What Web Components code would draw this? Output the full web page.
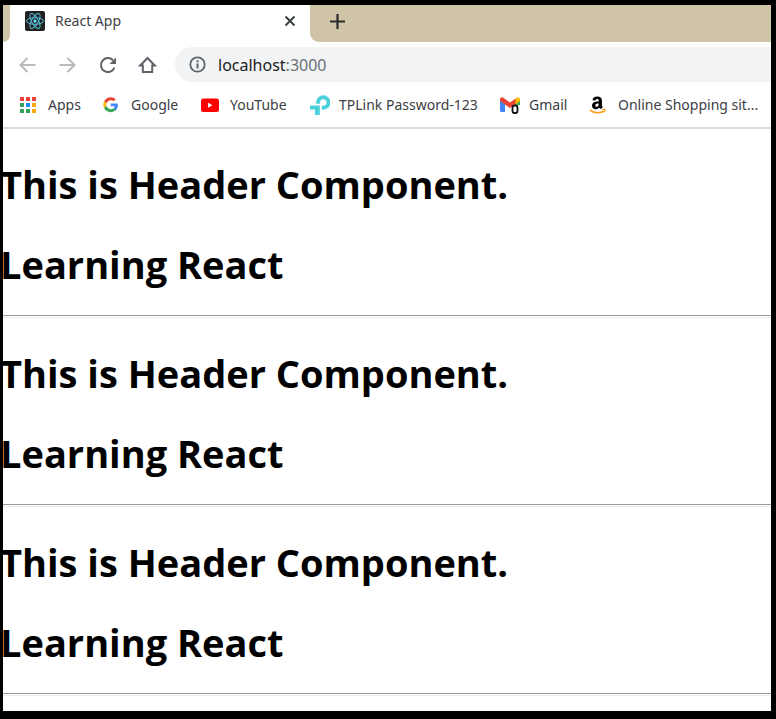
<!DOCTYPE html>
<html lang="en">
<head>
<meta charset="utf-8">
<title>React App</title>
<style>
  html, body { margin: 0; min-height: 100%; background: #000; }
  body { font-family: "Noto Sans", "Open Sans", sans-serif; color: #3c4043; }
</style>
</head>
<body>
<browser-window>
  <tab-strip slot="tabs" label="React App"></tab-strip>
  <address-bar slot="toolbar" host="localhost" port=":3000"></address-bar>
  <bookmarks-bar slot="bookmarks">
    <bookmark-link name="apps">Apps</bookmark-link>
    <bookmark-link name="google">Google</bookmark-link>
    <bookmark-link name="youtube">YouTube</bookmark-link>
    <bookmark-link name="tplink">TPLink Password-123</bookmark-link>
    <bookmark-link name="gmail">Gmail</bookmark-link>
    <bookmark-link name="amazon">Online Shopping sit...</bookmark-link>
  </bookmarks-bar>
  <header-section><span slot="title">This is Header Component.</span><span slot="subtitle">Learning React</span></header-section>
  <header-section><span slot="title">This is Header Component.</span><span slot="subtitle">Learning React</span></header-section>
  <header-section><span slot="title">This is Header Component.</span><span slot="subtitle">Learning React</span></header-section>
</browser-window>

<script>
const component = (name, render) => customElements.define(name, class extends HTMLElement {
  constructor() {
    super();
    this.attachShadow({ mode: 'open' });
  }
  connectedCallback() {
    this.shadowRoot.innerHTML = render(this);
  }
});

const icons = {
  apps: `<svg viewBox="0 0 20 20"><g fill="#f23f3a"><path d="M1 2h4v4H1zM7 2h4v4H7zM13 2h4v4h-4z"/></g><path fill="#34a05a" d="M1 8h4v4H1zM1 14h4v4H1zM7 14h4v4H7z"/><path fill="#1f8bf5" d="M7 8h4v4H7z"/><path fill="#f9a90c" d="M13 8h4v4h-4zM13 14h4v4h-4z"/></svg>`,
  google: `<svg viewBox="-4 -7 64 64"><path fill="#EA4335" d="M24 9.5c3.54 0 6.71 1.22 9.21 3.6l6.85-6.85C35.9 2.38 30.47 0 24 0 14.62 0 6.51 5.38 2.56 13.22l7.98 6.19C12.43 13.72 17.74 9.5 24 9.5z"/><path fill="#4285F4" d="M46.98 24.55c0-1.57-.15-3.09-.38-4.55H24v9.02h12.94c-.58 2.96-2.26 5.48-4.78 7.18l7.73 6c4.51-4.18 7.09-10.36 7.09-17.65z"/><path fill="#FBBC05" d="M10.53 28.59A14.5 14.5 0 0 1 9.77 24c0-1.6.27-3.14.76-4.59l-7.98-6.19A24 24 0 0 0 0 24c0 3.88.92 7.54 2.56 10.78z"/><path fill="#34A853" d="M24 48c6.48 0 11.93-2.13 15.89-5.81l-7.73-6c-2.15 1.45-4.92 2.3-8.16 2.3-6.26 0-11.57-4.22-13.47-9.91l-7.98 6.19C6.51 42.62 14.62 48 24 48z"/></svg>`,
  youtube: `<svg viewBox="0 0 20 20"><rect y="3.500" width="18" height="13.500" rx="2.500" fill="#f00"/><path d="M7 7.800v5l4.500-2.500z" fill="#fff"/></svg>`,
  tplink: `<svg viewBox="0 0 20 20"><path d="M7.300 8.500V7.300a5.200 5.200 0 1 1 5.200 5.200H11" transform="translate(.8 .2)" fill="none" stroke="#4bcfda" stroke-width="4"/><path d="M0 10.500h9.800V20H5v-5.500H0z" fill="#4bcfda"/></svg>`,
  gmail: `<svg viewBox="0 0 20 20"><path d="M0 5l5 3.500V17H1.500A1.500 1.500 0 0 1 0 15.500z" fill="#4285f4"/><path d="M15 8.500L20 5v5h-5z" fill="#34a853"/><path d="M15 4l2-1.500c1.500-.7 3 .2 3 2V6l-5 4z" fill="#fbbc04"/><path d="M0 4.500c0-2 2-2.700 3.300-1.700L10 7.600l5.500-4v5.500L10 13 0 6z" fill="#ea4335"/><rect x="12.500" y="10.500" width="5" height="7.500" rx="2" fill="#fff" stroke="#111" stroke-width="1.800"/></svg>`,
  amazon: `<svg viewBox="0 0 20 20"><path d="M3.500 5.200C3.700 3 5.300 1.500 8.200 1.500c3 0 4.700 1.300 4.700 4.100v4.300c0 1.100.5 1.600 1 2.300l-2.200 1.900c-.7-.5-1.100-1-1.500-1.700-1 1.300-2.200 1.800-3.700 1.800-2.100 0-3.500-1.300-3.500-3.400C3 7.600 5.100 6.500 9.700 6.400V5.600c0-1-.5-1.500-1.400-1.500-1 0-1.600.5-1.800 1.500zM9.700 8.400c-2.300 0-3.400.6-3.400 2 0 .8.500 1.400 1.300 1.400 1.500 0 2.100-1.500 2.100-3.400z" fill="#000"/><path d="M.8 14.800c3.800 3.200 9.500 3.600 14.300 1.400" fill="none" stroke="#ff9c1a" stroke-width="1.600"/><path d="M13 14.800c1.500-.7 2.800-.5 3 0 .2.700-.2 1.700-1 2.300" fill="none" stroke="#ff9c1a" stroke-width="1.200"/></svg>`
};

component('browser-window', () => `
  <style>
    :host { display: block; padding: 5px 5px 8px 3px; }
    .view { background: #fff; overflow: hidden; }
    main { padding-bottom: 15px; }
  </style>
  <div class="view">
    <slot name="tabs"></slot>
    <slot name="toolbar"></slot>
    <slot name="bookmarks"></slot>
    <main><slot></slot></main>
  </div>`);

component('tab-strip', el => `
  <style>
    :host { display: flex; height: 37px; background: #fff; }
    .prev { width: 7px; background: #cfc3a8; border-radius: 0 0 8px 0; }
    .tab { width: 300px; box-sizing: border-box; display: flex; align-items: center; gap: 10px; padding: 0 13px 5px 15px; }
    .label { flex: 1; font-size: 14px; line-height: 20px; }
    .rest { flex: 1; background: #cfc3a8; border-radius: 0 0 0 9px; padding: 0 0 5px 18px; display: flex; align-items: center; }
    svg { display: block; }
    button { border: 0; background: none; padding: 0; }
  </style>
  <div class="prev"></div>
  <div class="tab">
    <svg width="20" height="20" viewBox="0 0 20 20"><rect width="20" height="20" rx="2" fill="#222"/><g fill="none" stroke="#52bdd6" stroke-width="1"><ellipse cx="10" cy="10" rx="8.500" ry="3.300"/><ellipse cx="10" cy="10" rx="8.500" ry="3.300" transform="rotate(60 10 10)"/><ellipse cx="10" cy="10" rx="8.500" ry="3.300" transform="rotate(120 10 10)"/></g><circle cx="10" cy="10" r="1.700" fill="#61dafb"/></svg>
    <span class="label">${el.getAttribute('label')}</span>
    <button aria-label="Close tab"><svg width="14" height="14" viewBox="0 0 14 14"><path d="M2.500 2.500l9 9m0-9l-9 9" stroke="#3c4043" stroke-width="2"/></svg></button>
  </div>
  <div class="rest"><button aria-label="New tab"><svg width="18" height="18" viewBox="0 0 18 18"><path d="M9.500 2v15M2 9.500h15" stroke="#2b2c2e" stroke-width="2.200"/></svg></button></div>`);

component('address-bar', el => `
  <style>
    :host { display: flex; align-items: center; height: 45px; padding-left: 15px; }
    nav { display: flex; gap: 20px; padding-right: 17px; }
    button { border: 0; background: none; padding: 0; }
    svg { display: block; fill: none; }
    .box { flex: 1; height: 35px; display: flex; align-items: center; gap: 10px; padding-left: 13px; background: #f1f3f4; border-radius: 18px 0 0 18px; }
    .url { font-size: 16px; line-height: 22px; color: #202124; }
    .url span { color: #6b7075; }
  </style>
  <nav>
    <button aria-label="Back"><svg width="20" height="20" viewBox="0 0 20 20" stroke="#b8babd" stroke-width="2"><path d="M17.500 10H3M9.500 3L2.500 10l7 7"/></svg></button>
    <button aria-label="Forward"><svg width="20" height="20" viewBox="0 0 20 20" stroke="#b8babd" stroke-width="2"><path d="M1.500 10H16M9.500 3l7 7-7 7"/></svg></button>
    <button aria-label="Reload"><svg width="20" height="20" viewBox="0 0 20 20"><path d="M16.500 12.500A7 7 0 1 1 15 5.200" stroke="#5f6368" stroke-width="2"/><path d="M18 2.500v6.500h-6.500z" fill="#5f6368"/></svg></button>
    <button aria-label="Home"><svg width="20" height="20" viewBox="0 0 20 20" stroke="#5f6368" stroke-width="2"><path d="M4.800 10.500H2.200L9.500 3l7.300 7.500h-2.600V17H4.800z"/></svg></button>
  </nav>
  <div class="box">
    <svg width="20" height="20" viewBox="0 0 20 20"><circle cx="9.500" cy="9.500" r="7.200" stroke="#5f6368" stroke-width="1.800"/><path d="M9.500 8.500v5M9.500 5.300v2" stroke="#5f6368" stroke-width="2"/></svg>
    <div class="url">${el.getAttribute('host')}<span>${el.getAttribute('port')}</span></div>
  </div>`);

component('bookmarks-bar', () => `
  <style>
    :host { display: grid; grid-template-columns: 83px 99px 109px 190px 89px 1fr; align-items: center; height: 36px; padding: 0 0 4px 16px; border-bottom: 2px solid #dadce0; white-space: nowrap; }
  </style>
  <slot></slot>`);

component('bookmark-link', el => `
  <style>
    a { display: flex; align-items: center; gap: 9px; color: inherit; text-decoration: none; font-size: 14px; line-height: 20px; }
    svg { display: block; width: 20px; height: 20px; }
  </style>
  <a href="#">${icons[el.getAttribute('name')]}<span><slot></slot></span></a>`);

component('header-section', () => `
  <style>
    :host { display: block; padding-top: 29px; color: #000; }
    h1 { margin: 0 0 27px -3px; font: 700 38px/53px "Open Sans", "Noto Sans", sans-serif; }
    h1:last-of-type { margin-bottom: 24px; }
    hr { margin: 0; height: 1px; border: solid; border-width: 1px 0; border-color: #999 transparent #eee; }
  </style>
  <h1><slot name="title"></slot></h1>
  <h1><slot name="subtitle"></slot></h1>
  <hr>`);
</script>
</body>
</html>
